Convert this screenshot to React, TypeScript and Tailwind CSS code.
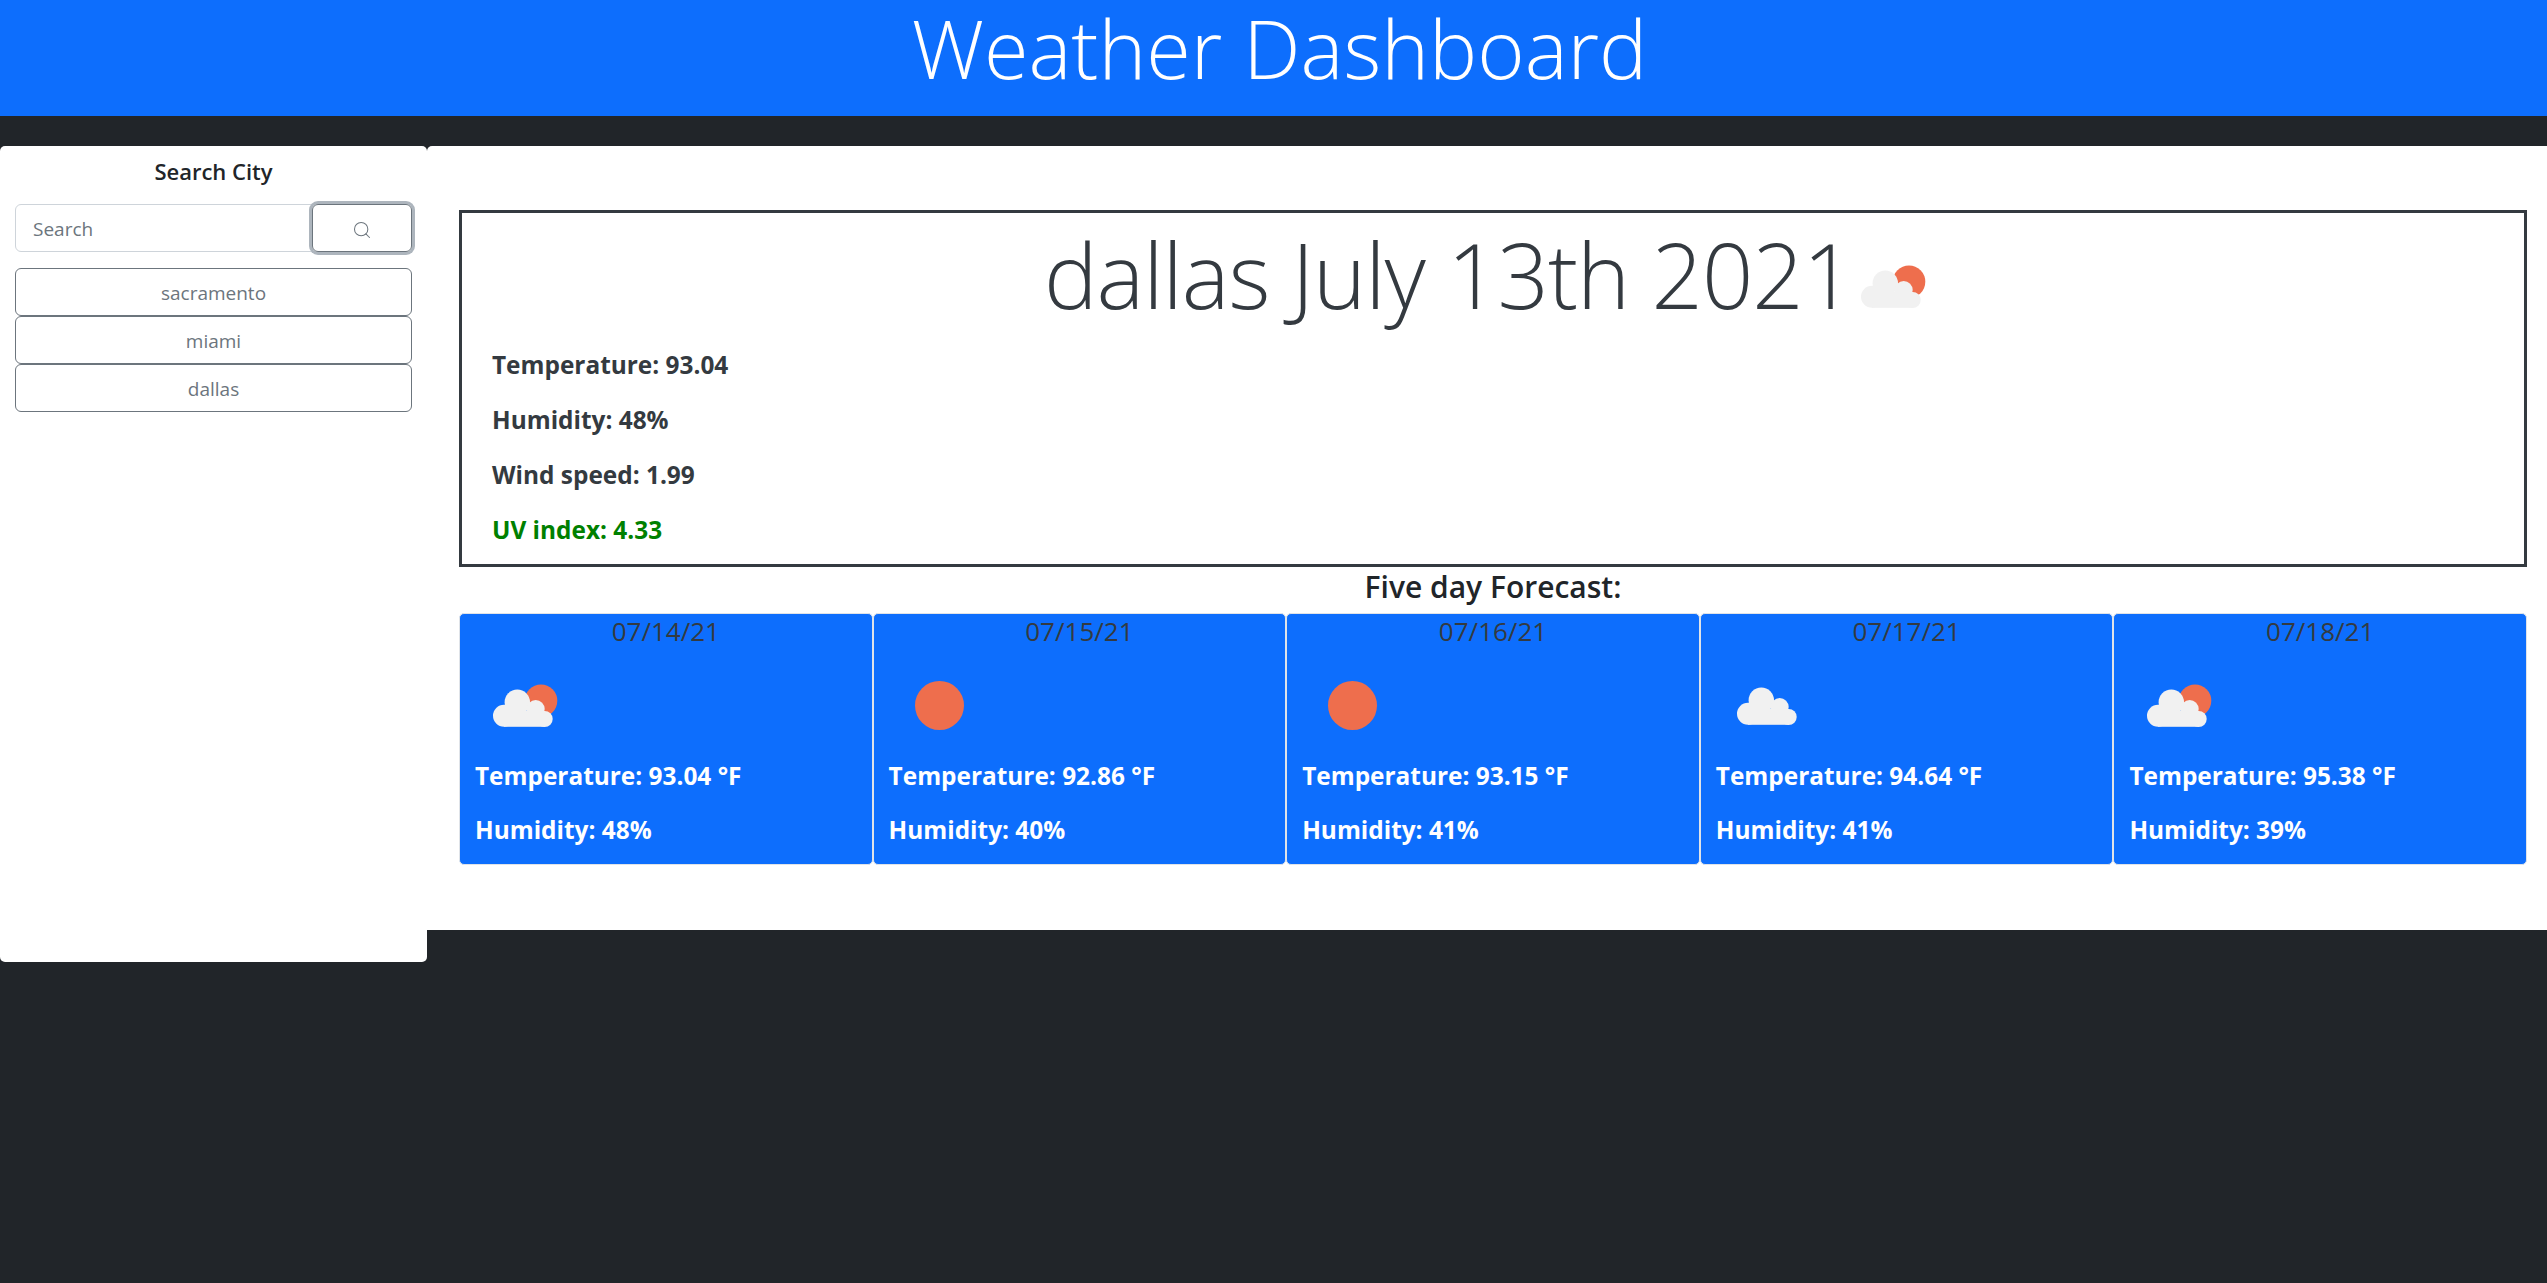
import { Search } from "lucide-react";

const FONT = "font-['Open_Sans','Noto_Sans',sans-serif]";

const CITIES = ["sacramento", "miami", "dallas"];

const FORECAST = [
  { date: "07/14/21", temp: "93.04", humidity: "48", icon: "partly" },
  { date: "07/15/21", temp: "92.86", humidity: "40", icon: "sun" },
  { date: "07/16/21", temp: "93.15", humidity: "41", icon: "sun" },
  { date: "07/17/21", temp: "94.64", humidity: "41", icon: "cloud" },
  { date: "07/18/21", temp: "95.38", humidity: "39", icon: "partly" },
];

function Cloud({ dx = 0, dy = 0 }: { dx?: number; dy?: number }) {
  return (
    <g fill="#f1f1f1" transform={`translate(${dx} ${dy})`}>
      <circle cx="19" cy="50.7" r="11" />
      <circle cx="32.3" cy="37.3" r="12.7" />
      <circle cx="50.7" cy="44" r="9" />
      <circle cx="59.7" cy="54" r="8" />
      <rect x="19" y="46" width="41" height="15.8" />
    </g>
  );
}

function WeatherIcon({ kind }: { kind: string }) {
  return (
    <svg viewBox="0 0 81 81" className="w-[81px] h-[81px] shrink-0">
      {kind === "sun" && <circle cx="40.5" cy="40.5" r="24.5" fill="#ee6e4d" />}
      {kind === "partly" && (
        <>
          <circle cx="56" cy="35.7" r="16.3" fill="#ee6e4d" />
          <Cloud />
        </>
      )}
      {kind === "cloud" && <Cloud dx={3} dy={-2} />}
    </svg>
  );
}

export default function App() {
  return (
    <div className={`min-h-[1283px] bg-[#212529] ${FONT}`}>
      <header className="h-[116px] bg-[#0d6efd] flex items-center justify-center pb-[20px] pl-[12px]">
        <h1 className="text-[81px] font-light text-white leading-[96px]">Weather Dashboard</h1>
      </header>

      <div className="flex items-start pt-[30px]">
        <aside className="w-[427px] h-[816px] shrink-0 bg-white rounded-[5px] px-[15px] pt-[11px]">
          <h5 className="text-center text-[22px] font-semibold text-[#212529] leading-[28px]">Search City</h5>
          <div className="flex mt-[19px]">
            <div className="flex-1 h-[48px] border border-[#ced4da] rounded-l-[6px] px-[17px] pt-[2px] flex items-center text-[19px] text-[#6c757d]">
              Search
            </div>
            <div className="w-[100px] h-[48px] border border-[#6c757d] rounded-[6px] ring-[3px] ring-[#adb5bd] flex items-center justify-center pt-[3px] text-[#6c757d]">
              <Search className="w-[20px] h-[20px]" strokeWidth={1.25} />
            </div>
          </div>
          <div className="mt-[16px] flex flex-col">
            {CITIES.map((city) => (
              <div
                key={city}
                className="h-[48px] border border-[#6c757d] rounded-[6px] pt-[2px] flex items-center justify-center text-[19px] text-[#6c757d]"
              >
                {city}
              </div>
            ))}
          </div>
        </aside>

        <main className="flex-1 h-[784px] bg-white rounded-tl-[5px] pl-[32px] pr-[20px] pt-[64px]">
          <section className="h-[357px] border-[3px] border-[#343a40] px-[30px]">
            <div className="flex items-center justify-center h-[122px] pr-[8px]">
              <h2 className="text-[90px] font-light tracking-[-1px] text-[#343a40] leading-none">dallas July 13th 2021</h2>
              <div className="pt-[24px]">
                <WeatherIcon kind="partly" />
              </div>
            </div>
            <div className="flex flex-col gap-[27px] text-[24.4px] font-bold text-[#343a40] leading-[28px] pt-[16px]">
              <p>Temperature: 93.04</p>
              <p>Humidity: 48%</p>
              <p>Wind speed: 1.99</p>
              <p className="text-[#008000]">UV index: 4.33</p>
            </div>
          </section>

          <h3 className="text-center text-[30px] font-semibold text-[#212529] leading-[40px] pb-[6px]">Five day Forecast:</h3>

          <div className="grid grid-cols-5">
            {FORECAST.map((day) => (
              <div key={day.date} className="h-[252px] bg-[#0d6efd] border border-[#dfe3e8] rounded-[5px] px-[15px]">
                <p className="text-center text-[26px] text-[#343a40] leading-[34px]">{day.date}</p>
                <div className="mt-[17px] pl-[10px]">
                  <WeatherIcon kind={day.icon} />
                </div>
                <div className="flex flex-col gap-[26px] mt-[16px] text-[24.4px] font-bold text-white leading-[28px]">
                  <p>Temperature: {day.temp} °F</p>
                  <p>Humidity: {day.humidity}%</p>
                </div>
              </div>
            ))}
          </div>
        </main>
      </div>
    </div>
  );
}
